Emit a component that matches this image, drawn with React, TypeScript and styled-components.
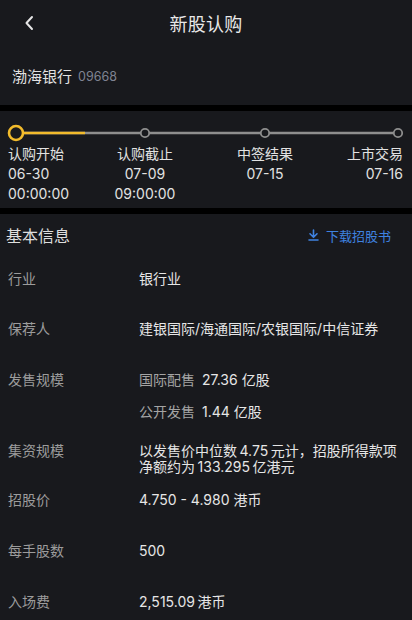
import React from "react";
import styled, { createGlobalStyle } from "styled-components";

const GlobalStyle = createGlobalStyle`
  html, body { margin: 0; padding: 0; background: #18191d; }
  body { font-family: "Inter", "Noto Sans CJK SC", sans-serif; -webkit-font-smoothing: antialiased; }
  * { box-sizing: border-box; }
`;

const Page = styled.div`
  width: 412px;
  min-height: 620px;
  background: #18191d;
  color: #e6e6e6;
  overflow: hidden;
`;

const NavBar = styled.div`
  height: 46px;
  display: grid;
  grid-template-columns: 60px 1fr 60px;
  align-items: center;
`;

const BackButton = styled.div`
  display: flex;
  align-items: center;
  padding-left: 24px;
  height: 100%;
`;

const Title = styled.div`
  text-align: center;
  font-size: 18px;
  color: #e8e8e8;
  letter-spacing: 0.2px;
`;

const StockHeader = styled.div`
  height: 59px;
  display: flex;
  align-items: center;
  padding: 0 12px 0 12px;
  gap: 6px;
`;

const StockName = styled.span`
  font-size: 15px;
  color: #e2e2e2;
`;

const StockCode = styled.span`
  font-size: 12.5px;
  color: #7f8392;
  padding-top: 2px;
`;

const Divider = styled.div`
  height: 6px;
  background: #000;
`;

const Timeline = styled.div`
  height: 97px;
  padding-top: 12px;
`;

const Track = styled.svg`
  display: block;
  width: 412px;
  height: 20px;
`;

const Steps = styled.div`
  display: grid;
  grid-template-columns: 75px 124px 116px 1fr;
  padding: 0 9px 0 8px;
  margin-top: 1px;
`;

const Step = styled.div<{ $align: "left" | "center" | "right" }>`
  display: flex;
  flex-direction: column;
  align-items: ${(p) => (p.$align === "left" ? "flex-start" : p.$align === "right" ? "flex-end" : "center")};
  font-size: 14px;
  line-height: 20px;
  color: #e2e2e2;
  white-space: nowrap;
`;

const SectionHeader = styled.div`
  height: 44px;
  display: flex;
  align-items: center;
  justify-content: space-between;
  padding: 0 21px 0 6px;
`;

const SectionTitle = styled.div`
  font-size: 16px;
  color: #dedede;
  margin-top: -2px;
`;

const DownloadLink = styled.div`
  display: flex;
  align-items: center;
  gap: 7px;
  font-size: 13px;
  color: #3f82e0;
  margin-top: -2px;
`;

const InfoList = styled.div`
  padding: 11px 0 0 8px;
`;

const Row = styled.div<{ $top: number }>`
  display: grid;
  grid-template-columns: 131px 1fr;
  margin-top: ${(p) => p.$top}px;
`;

const Label = styled.div`
  font-size: 14px;
  line-height: 20px;
  color: #9c9c9c;
`;

const Value = styled.div<{ $wrap?: boolean }>`
  font-size: 14px;
  line-height: ${(p) => (p.$wrap ? "16px" : "20px")};
  padding-top: ${(p) => (p.$wrap ? "2px" : "0")};
  padding-right: 8px;
  color: #e6e6e6;
`;

const SubLines = styled.div`
  display: flex;
  flex-direction: column;
  gap: 12px;
`;

const SubLine = styled.div`
  font-size: 14px;
  line-height: 20px;
  color: #e6e6e6;
  display: flex;
  gap: 7px;
`;

const SubLabel = styled.span`
  color: #a4a4a4;
`;

const steps = [
  { name: "认购开始", date: "06-30", time: "00:00:00", align: "left" as const },
  { name: "认购截止", date: "07-09", time: "09:00:00", align: "center" as const },
  { name: "中签结果", date: "07-15", time: "", align: "center" as const },
  { name: "上市交易", date: "07-16", time: "", align: "right" as const },
];

export default function App() {
  return (
    <Page>
      <GlobalStyle />
      <NavBar>
        <BackButton>
          <svg width="10" height="16" viewBox="0 0 10 16">
            <polyline points="8,2 2.5,8 8,14" fill="none" stroke="#e6e6e6" strokeWidth="2" strokeLinecap="round" strokeLinejoin="round" />
          </svg>
        </BackButton>
        <Title>新股认购</Title>
        <div />
      </NavBar>
      <StockHeader>
        <StockName>渤海银行</StockName>
        <StockCode>09668</StockCode>
      </StockHeader>
      <Divider />
      <Timeline>
        <Track viewBox="0 0 412 20">
          <line x1="16" y1="10" x2="398" y2="10" stroke="#8e8e8e" strokeWidth="2.5" />
          <line x1="16" y1="10" x2="85" y2="10" stroke="#f2bb2c" strokeWidth="2.5" />
          <circle cx="16" cy="10" r="7" fill="#18191d" stroke="#f2bb2c" strokeWidth="2.6" />
          {[145, 265, 398].map((x) => (
            <circle key={x} cx={x} cy="10" r="4.2" fill="#18191d" stroke="#8e8e8e" strokeWidth="1.8" />
          ))}
        </Track>
        <Steps>
          {steps.map((s) => (
            <Step key={s.name} $align={s.align}>
              <span>{s.name}</span>
              <span>{s.date}</span>
              {s.time && <span>{s.time}</span>}
            </Step>
          ))}
        </Steps>
      </Timeline>
      <Divider />
      <SectionHeader>
        <SectionTitle>基本信息</SectionTitle>
        <DownloadLink>
          <svg width="11" height="12" viewBox="0 0 11 12">
            <path d="M5.5 1 V8 M2 4.8 L5.5 8.3 L9 4.8 M1 11 H10" fill="none" stroke="#3f82e0" strokeWidth="1.6" strokeLinecap="round" strokeLinejoin="round" />
          </svg>
          <span>下载招股书</span>
        </DownloadLink>
      </SectionHeader>
      <InfoList>
        <Row $top={0}>
          <Label>行业</Label>
          <Value>银行业</Value>
        </Row>
        <Row $top={30}>
          <Label>保荐人</Label>
          <Value>建银国际/海通国际/农银国际/中信证券</Value>
        </Row>
        <Row $top={31}>
          <Label>发售规模</Label>
          <SubLines>
            <SubLine>
              <SubLabel>国际配售</SubLabel>
              <span>27.36 亿股</span>
            </SubLine>
            <SubLine>
              <SubLabel>公开发售</SubLabel>
              <span>1.44 亿股</span>
            </SubLine>
          </SubLines>
        </Row>
        <Row $top={19}>
          <Label>集资规模</Label>
          <Value $wrap>以发售价中位数{"\u2009"}4.75{"\u2009"}元计，招股所得款项净额约为{"\u2009"}133.295{"\u2009"}亿港元</Value>
        </Row>
        <Row $top={15}>
          <Label>招股价</Label>
          <Value>4.750 - 4.980 港币</Value>
        </Row>
        <Row $top={31}>
          <Label>每手股数</Label>
          <Value>500</Value>
        </Row>
        <Row $top={31}>
          <Label>入场费</Label>
          <Value>2,515.09{"\u2009"}港币</Value>
        </Row>
      </InfoList>
    </Page>
  );
}
